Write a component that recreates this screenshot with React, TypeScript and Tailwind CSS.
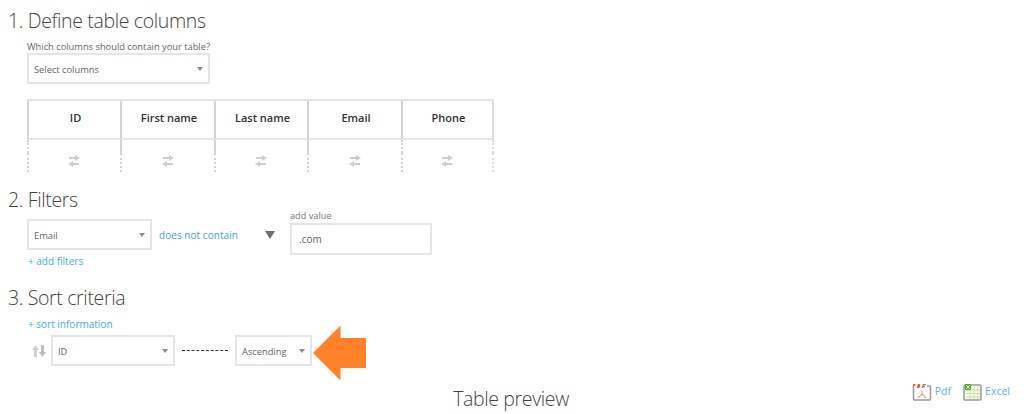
import React from "react";

const font = { fontFamily: '"Open Sans", sans-serif' };

function Caret({ className = "" }: { className?: string }) {
  return (
    <svg width="6" height="4" viewBox="0 0 6 4" className={className}>
      <path d="M0 0h6L3 4z" fill="#8f8f8f" />
    </svg>
  );
}

function Select({ label, className }: { label: string; className: string }) {
  return (
    <div className={`flex items-center justify-between border-2 border-[#e6e6e6] bg-white pl-[5px] pr-[5px] text-[9.3px] text-[#666] ${className}`}>
      <span className="pt-[2px]">{label}</span>
      <Caret />
    </div>
  );
}

function Swap() {
  return (
    <svg width="14" height="12" viewBox="0 0 14 12">
      <path d="M2 2h6V0l5 3-5 3V4H2z" fill="#cfcfcf" />
      <path d="M12 8H6V6L1 9l5 3v-2h6z" fill="#cfcfcf" />
    </svg>
  );
}

function Column({ name, first, last }: { name: string; first?: boolean; last?: boolean }) {
  const right = last ? "border-r-2 border-r-[#dcdcdc]" : "";
  return (
    <div className="flex flex-col">
      <div className={`flex h-[39px] items-center justify-center border-b-2 border-l-2 border-b-[#e8e8e8] border-l-[#d4d4d4] pb-[2px] pl-[2px] text-[11px] font-semibold text-[#333] ${right}`}>
        {name}
      </div>
      <div className={`h-[13px] border-l-2 ${first ? "border-dotted border-l-[#d8d8d8]" : "border-l-[#d4d4d4]"} ${last ? "border-r-2 border-dotted border-r-[#dcdcdc]" : ""}`} />
      <div className={`flex h-[19px] items-start justify-center border-l-2 border-dotted border-l-[#d4d4d4] pr-[1px] pt-[2px] ${last ? "border-r-2 border-r-[#dcdcdc]" : ""}`}>
        <Swap />
      </div>
    </div>
  );
}

function Heading({ children, className = "" }: { children: React.ReactNode; className?: string }) {
  return <h2 className={`pl-[8px] text-[19.5px] font-light leading-[26px] tracking-[-0.36px] text-[#444] ${className}`}>{children}</h2>;
}

function SortIcon() {
  return (
    <svg width="14" height="12" viewBox="0 0 14 12">
      <path d="M3.5 0L7 5H5v7H2V5H0z" fill="#d2d2d2" />
      <path d="M10.5 12L7 7h2V0h3v7h2z" fill="#bdbdbd" />
    </svg>
  );
}

function PdfIcon() {
  return (
    <svg width="20" height="18" viewBox="0 0 20 18">
      <rect x="1.5" y="3" width="17" height="14" rx="1" fill="#fff" stroke="#9a9a9a" strokeWidth="1.5" />
      <path d="M10 7.5v3.5L6 15M10 11l4 4" fill="none" stroke="#f2a08a" strokeWidth="1.2" />
      <path d="M0 0h15v5H0z" fill="#fff" />
      <path d="M0.5 5l1-4h2l-.3 2H2l-.3 2zM5 5l.7-4h2l.5 2-1 2zM10 5l.7-4h3l-.2 1h-1.8l-.1 1h1.5l-.2 1h-1.4l-.2 1z" fill="#e8503a" />
    </svg>
  );
}

function ExcelIcon() {
  return (
    <svg width="19" height="18" viewBox="0 0 19 18">
      <rect x="1" y="2" width="17" height="15" rx="1" fill="#f4f9e8" stroke="#9a9a9a" strokeWidth="1.5" />
      <path d="M7 4v12M11 4v12M15 4v12M3 7h14M3 10.5h14M3 14h14" stroke="#cfe3a8" strokeWidth="1" />
      <path d="M2 1h6v6H2z" fill="#5fa82f" />
      <path d="M3 2l4 4M7 2L3 6" stroke="#d9edc5" strokeWidth="1" />
    </svg>
  );
}

export default function App() {
  return (
    <div style={font} className="relative h-[414px] w-[1024px] overflow-hidden bg-white">
      <Heading className="pt-[8px]">1. Define table columns</Heading>
      <div className="pl-[27px]">
        <div className="mt-[6px] text-[9.3px] leading-[13px] text-[#666]">Which columns should contain your table?</div>
        <Select label="Select columns" className="h-[31px] w-[183px]" />
        <div className="mt-[15px] grid w-[467px] grid-cols-[93px_94px_93px_94px_93px] border-t-2 border-[#e6e6e6]">
          <Column name="ID" first />
          <Column name="First name" />
          <Column name="Last name" />
          <Column name="Email" />
          <Column name="Phone" last />
        </div>
      </div>
      <Heading className="mt-[15px]">2. Filters</Heading>
      <div className="flex items-start pl-[27px]">
        <div className="pt-[6px]">
          <Select label="Email" className="h-[31px] w-[125px]" />
          <div className="mt-[5px] pl-[1px] text-[10px] leading-[12px] text-[#45b0e0]">+ add filters</div>
        </div>
        <div className="ml-[7px] mt-[9px] flex h-[26px] w-[131px] items-center justify-between text-[10px] tracking-[0.05px] text-[#45a5d8]">
          <span>does not contain</span>
          <svg width="10" height="8" viewBox="0 0 10 8" className="mr-[15px]">
            <path d="M0 0h10L5 8z" fill="#6f6f6f" />
          </svg>
        </div>
        <div className="-mt-[4px]">
          <div className="text-[9.2px] leading-[14px] text-[#777]">add value</div>
          <div className="flex h-[32px] w-[142px] items-center border-2 border-[#e6e6e6] pl-[7px] text-[10px] text-[#666]">.com</div>
        </div>
      </div>
      <Heading className="mt-[18px]">3. Sort criteria</Heading>
      <div className="pl-[28px] pt-[7px] text-[10px] leading-[12px] text-[#45b0e0]">+ sort information</div>
      <div className="mt-[5px] flex h-[31px] items-center pl-[32px]">
        <SortIcon />
        <Select label="ID" className="ml-[5px] h-[31px] w-[124px]" />
        <div className="ml-[7px] w-[46px] border-t border-dashed border-[#333]" />
        <Select label="Ascending" className="ml-[7px] h-[31px] w-[77px]" />
        <svg width="53" height="54" viewBox="0 0 53 54" className="-my-[12px] ml-[1px] translate-y-[2px]">
          <path d="M0.5 27L27 0.5V12.5H52.5V41.5H27V53.5z" fill="#ff8228" stroke="#ff8228" strokeLinejoin="round" />
        </svg>
      </div>
      <div className="mt-[14px] flex h-[38px] items-center justify-center pr-[2px] text-[19.5px] font-light tracking-[-0.36px] text-[#444]">
        <span>Table preview</span>
      </div>
      <div className="absolute bottom-[13px] right-[14px] flex items-center text-[10.5px] text-[#5db4e4]">
        <PdfIcon />
        <span className="ml-[3px]">Pdf</span>
        <span className="ml-[12px]"><ExcelIcon /></span>
        <span className="ml-[3px]">Excel</span>
      </div>
    </div>
  );
}
